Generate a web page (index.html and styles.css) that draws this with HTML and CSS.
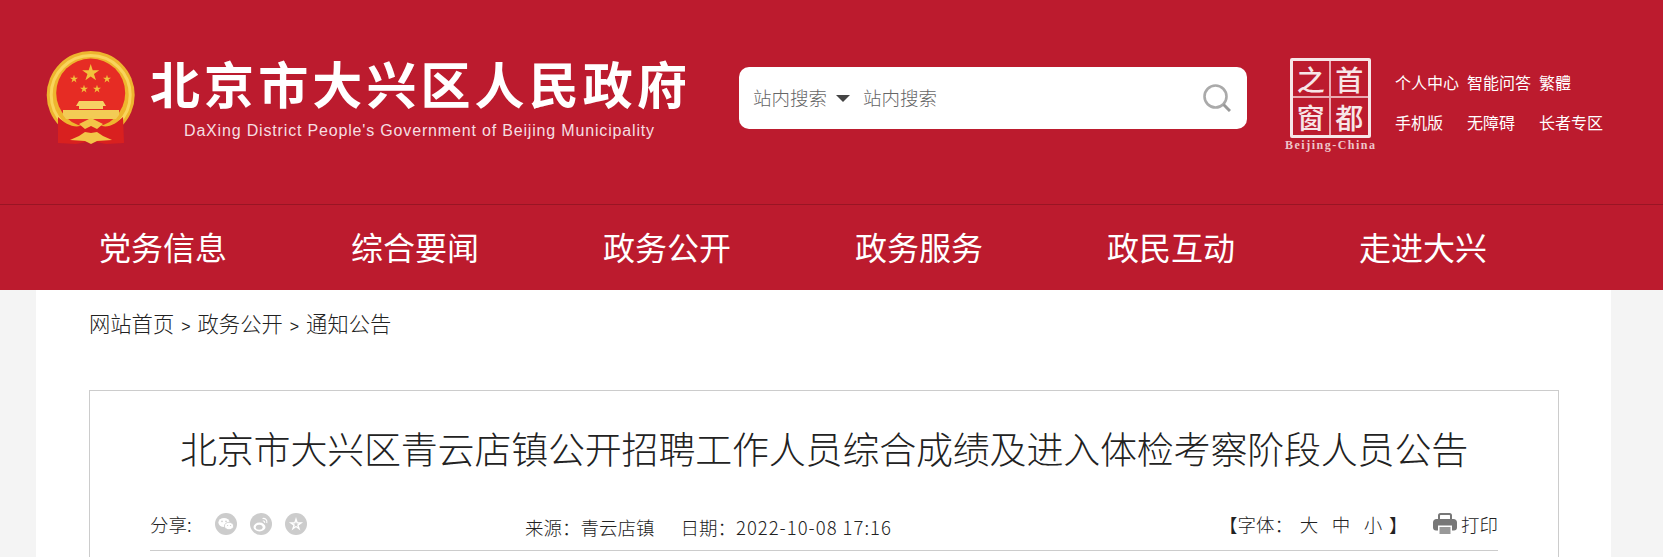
FILE: index.html
```html
<!DOCTYPE html>
<html lang="zh-CN">
<head>
    <meta charset="UTF-8">
    <title>北京市大兴区青云店镇公开招聘工作人员综合成绩及进入体检考察阶段人员公告</title>
    <link rel="stylesheet" href="styles.css">
</head>
<body>
<!-- 头部 -->
<header class="header">
    <div class="brand">
        <svg class="emblem" viewBox="0 0 90 95" aria-hidden="true">
            <defs>
                <polygon id="star" points="0,-1 .225,-.309 .951,-.309 .363,.118 .588,.809 0,.382 -.588,.809 -.363,.118 -.951,-.309 -.225,-.309"/>
            </defs>
            <circle cx="44.7" cy="45" r="44" fill="#eeb52e"/>
            <circle cx="44.7" cy="45" r="39.500" fill="none" stroke="#f9d45c" stroke-width="3"/>
            <circle cx="44.7" cy="43" r="34.500" fill="#e62c24"/>
            <use href="#star" transform="translate(44.7 23) scale(9)" fill="#f2c23c"/>
            <use href="#star" transform="translate(28 29) scale(4.2)" fill="#f2c23c"/>
            <use href="#star" transform="translate(61 29) scale(4.2)" fill="#f2c23c"/>
            <use href="#star" transform="translate(38 39) scale(4.2)" fill="#f2c23c"/>
            <use href="#star" transform="translate(51 39) scale(4.2)" fill="#f2c23c"/>
            <path d="M33 51h24l3 5h-3v3h-24v-3h-3z" fill="#f6d264"/>
            <path d="M17 60h56v5l-3 4h-50l-3-4z" fill="#f3cb55"/>
            <path d="M12 67c6 6 15 11 22 9 4-2 6-4 11-4s7 2 11 4c7 2 15-3 21-9l1 26-18 1-15-3-15 3-18-1z" fill="#d9201f"/>
            <path d="M24 90l9-4 6-4 6 1 6-1 6 4 9 4-15 1-6 3-6-3z" fill="#f3c548"/>
            <path d="M33 74l12-6 12 6-6 5-6-3-6 3z" fill="#f3c548"/>
        </svg>
        <div class="brand-text">
            <div class="brand-cn">北京市大兴区人民政府</div>
            <div class="brand-en">DaXing District People's Government of Beijing Municipality</div>
        </div>
    </div>

    <form class="search">
        <span class="search-type">站内搜索</span>
        <span class="caret"></span>
        <span class="search-input">站内搜索</span>
        <svg class="search-icon" viewBox="0 0 28 28" aria-hidden="true">
            <circle cx="12.5" cy="12.5" r="11" fill="none" stroke="#aaa" stroke-width="2.6"/>
            <path d="M20.5 20.5l6.5 6.5" stroke="#999" stroke-width="3"/>
        </svg>
    </form>

    <div class="capital">
        <div class="capital-frame">
            <span>之</span><span>首</span><span>窗</span><span>都</span>
        </div>
        <div class="capital-en">Beijing-China</div>
    </div>

    <div class="top-links">
        <a>个人中心</a><a>智能问答</a><a>繁體</a>
        <a>手机版</a><a>无障碍</a><a>长者专区</a>
    </div>
</header>

<!-- 导航 -->
<nav class="nav">
    <a>党务信息</a>
    <a>综合要闻</a>
    <a>政务公开</a>
    <a>政务服务</a>
    <a>政民互动</a>
    <a>走进大兴</a>
</nav>

<main class="main">
    <div class="crumbs">
        <a>网站首页</a><span class="sep">&gt;</span><a>政务公开</a><span class="sep">&gt;</span><a>通知公告</a>
    </div>

    <article class="article">
        <h1>北京市大兴区青云店镇公开招聘工作人员综合成绩及进入体检考察阶段人员公告</h1>
        <div class="meta">
            <div class="share">
                <span class="share-label">分享:</span>
                <!-- 微信 -->
                <svg class="share-icon" viewBox="0 0 22 22" aria-hidden="true">
                    <circle cx="11" cy="11" r="11" fill="#ccc"/>
                    <ellipse cx="9" cy="9.5" rx="5.6" ry="4.6" fill="#fff"/>
                    <ellipse cx="14" cy="13" rx="4.6" ry="3.7" fill="#fff" stroke="#ccc" stroke-width=".8"/>
                    <circle cx="7" cy="8.4" r=".8" fill="#ccc"/>
                    <circle cx="11" cy="8.4" r=".8" fill="#ccc"/>
                    <circle cx="12.6" cy="12.5" r=".6" fill="#ccc"/>
                    <circle cx="15.6" cy="12.5" r=".6" fill="#ccc"/>
                </svg>
                <!-- 微博 -->
                <svg class="share-icon" viewBox="0 0 22 22" aria-hidden="true">
                    <circle cx="11" cy="11" r="11" fill="#ccc"/>
                    <ellipse cx="9.5" cy="14" rx="6" ry="4.4" fill="#fff"/>
                    <ellipse cx="9.2" cy="14.3" rx="3.4" ry="2.5" fill="#ccc"/>
                    <path d="M12.5 5.5c2.8-.6 5 1.600 4.300 4.600M12.800 8c1.300-.3 2.100.6 1.800 1.900" fill="none" stroke="#fff" stroke-width="1.100"/>
                </svg>
                <!-- 收藏 -->
                <svg class="share-icon" viewBox="0 0 22 22" aria-hidden="true">
                    <circle cx="11" cy="11" r="11" fill="#ccc"/>
                    <use href="#star" transform="translate(11 11.500) scale(7.500)" fill="#fff"/>
                    <use href="#star" transform="translate(11 11.500) scale(3)" fill="#ccc"/>
                </svg>
            </div>
            <span class="source">来源：青云店镇</span>
            <span class="date">日期：<span class="date-num">2022-10-08 17:16</span></span>
            <div class="font-size">【字体：<a>大</a><a>中</a><a>小</a>】</div>
            <div class="print">
                <svg class="print-icon" viewBox="0 0 24 22" aria-hidden="true">
                    <path d="M6 7V2.500C6 1.500 6.800 1 7.500 1h9c.8 0 1.500.5 1.500 1.500V7" fill="none" stroke="#777" stroke-width="2"/>
                    <path d="M3.500 6h17C22.500 6 24 7.500 24 9.500v5c0 2-1.200 3-3 3h-2v-5H5v5H3c-1.800 0-3-1-3-3v-5C0 7.500 1.500 6 3.500 6z" fill="#777"/>
                    <path d="M6.500 14h11v7h-11z" fill="#999"/>
                </svg>
                打印
            </div>
        </div>
    </article>
</main>
</body>
</html>
```

FILE: styles.css
```css
html, body {
    margin: 0;
    height: 557px;
    overflow: hidden;
}
body {
    font-family: "Noto Sans CJK SC", "Liberation Sans", sans-serif;
    font-weight: 300;
    background-color: #f4f4f4;
    color: #222;
}
a {
    color: inherit;
}
.header {
    height: 204px;
    box-sizing: border-box;
    background-color: #bc1b2e;
    display: flex;
    align-items: flex-start;
    color: #fff;
}
.brand {
    display: flex;
    width: 739px;
    flex: none;
    box-sizing: border-box;
    padding: 50px 0 0 46px;
}
.emblem {
    width: 90px;
    height: 95px;
    flex: none;
    margin-right: 14px;
}
.brand-cn {
    font-size: 50px;
    line-height: 56px;
    margin-top: 4px;
    font-weight: 700;
    letter-spacing: 4.1px;
    white-space: nowrap;
}
.brand-en {
    font-family: "Liberation Sans", sans-serif;
    font-size: 16px;
    font-weight: 400;
    line-height: 20px;
    margin: 11px 0 0 34px;
    letter-spacing: .83px;
    color: #f6dfe2;
    white-space: nowrap;
}
.search {
    width: 508px;
    height: 62px;
    margin-top: 67px;
    flex: none;
    box-sizing: border-box;
    background: #fff;
    border-radius: 10px;
    display: flex;
    align-items: center;
    padding: 0 16px 2px 14px;
    color: #666;
    font-size: 18.5px;
}
.caret {
    width: 0;
    height: 0;
    margin: 3px 13px 0 9px;
    border-left: 7px solid transparent;
    border-right: 7px solid transparent;
    border-top: 7px solid #444;
}
.search-icon {
    width: 28px;
    height: 28px;
    margin: 2px 0 0 auto;
}
.capital {
    width: 90px;
    margin: 58px 0 0 38px;
    flex: none;
}
.capital-frame {
    width: 81px;
    height: 80px;
    margin-left: 5px;
    box-sizing: border-box;
    border: 3px solid #f7e6e8;
    border-radius: 2px;
    display: grid;
    grid-template-columns: 1fr 1fr;
    grid-template-rows: 1fr 1fr;
}
.capital-frame span {
    display: flex;
    align-items: center;
    justify-content: center;
    font-size: 28px;
    line-height: 1;
    font-weight: 500;
    color: #f7e6e8;
}
.capital-frame span:nth-child(1),
.capital-frame span:nth-child(3) {
    border-right: 2px solid #e9aab2;
}
.capital-frame span:nth-child(1),
.capital-frame span:nth-child(2) {
    border-bottom: 2px solid #e9aab2;
}
.capital-en {
    font-family: "Liberation Serif", serif;
    font-weight: 700;
    font-size: 12px;
    line-height: 14px;
    letter-spacing: 1.5px;
    color: #eec5ca;
    white-space: nowrap;
}
.top-links {
    margin: 62px 0 0 20px;
    display: grid;
    grid-template-columns: 72px 72px auto;
    font-size: 16px;
    font-weight: 400;
    line-height: 40px;
}
.nav {
    height: 86px;
    background-color: #bc1b2e;
    border-top: 1px solid #991524;
    box-sizing: border-box;
    display: flex;
    align-items: center;
    padding: 0 0 3px 99px;
    font-size: 32px;
    font-weight: 400;
    color: #fff;
}
.nav a {
    width: 252px;
    flex: none;
}
.main {
    margin: 0 52px 0 36px;
    padding: 0 52px 0 53px;
    background: #fff;
    height: 267px;
}
.crumbs {
    height: 100px;
    box-sizing: border-box;
    padding-top: 18px;
    font-size: 21.3px;
    line-height: 30px;
}
.sep {
    font-family: "Liberation Sans", sans-serif;
    font-size: 16px;
    margin: 0 7px;
}
.article {
    border: 1px solid #ccc;
    border-bottom: none;
    height: 167px;
    box-sizing: border-box;
    padding: 0 60px;
}
.article h1 {
    margin: 0;
    padding-top: 33px;
    font-size: 37px;
    line-height: 48px;
    font-weight: 300;
    text-align: center;
    letter-spacing: -.2px;
    white-space: nowrap;
}
.meta {
    margin-top: 39px;
    height: 39px;
    display: flex;
    align-items: flex-start;
    border-bottom: 1px solid #ccc;
    font-size: 18.5px;
    line-height: 26px;
    white-space: nowrap;
}
.share {
    width: 375px;
    flex: none;
    display: flex;
    align-items: center;
}
.share-label {
    width: 65px;
    flex: none;
}
.share-icon {
    width: 22px;
    height: 22px;
    margin-right: 13px;
}
.source {
    padding-top: 3px;
}
.date {
    margin-left: 26px;
    padding-top: 3px;
}
.date-num {
    letter-spacing: 1px;
}
.font-size {
    margin-left: auto;
}
.font-size a {
    margin: 0 6.75px;
}
.print {
    margin-left: 25.5px;
    display: flex;
    align-items: center;
}
.print-icon {
    width: 24px;
    height: 22px;
    margin-right: 4px;
}
```
